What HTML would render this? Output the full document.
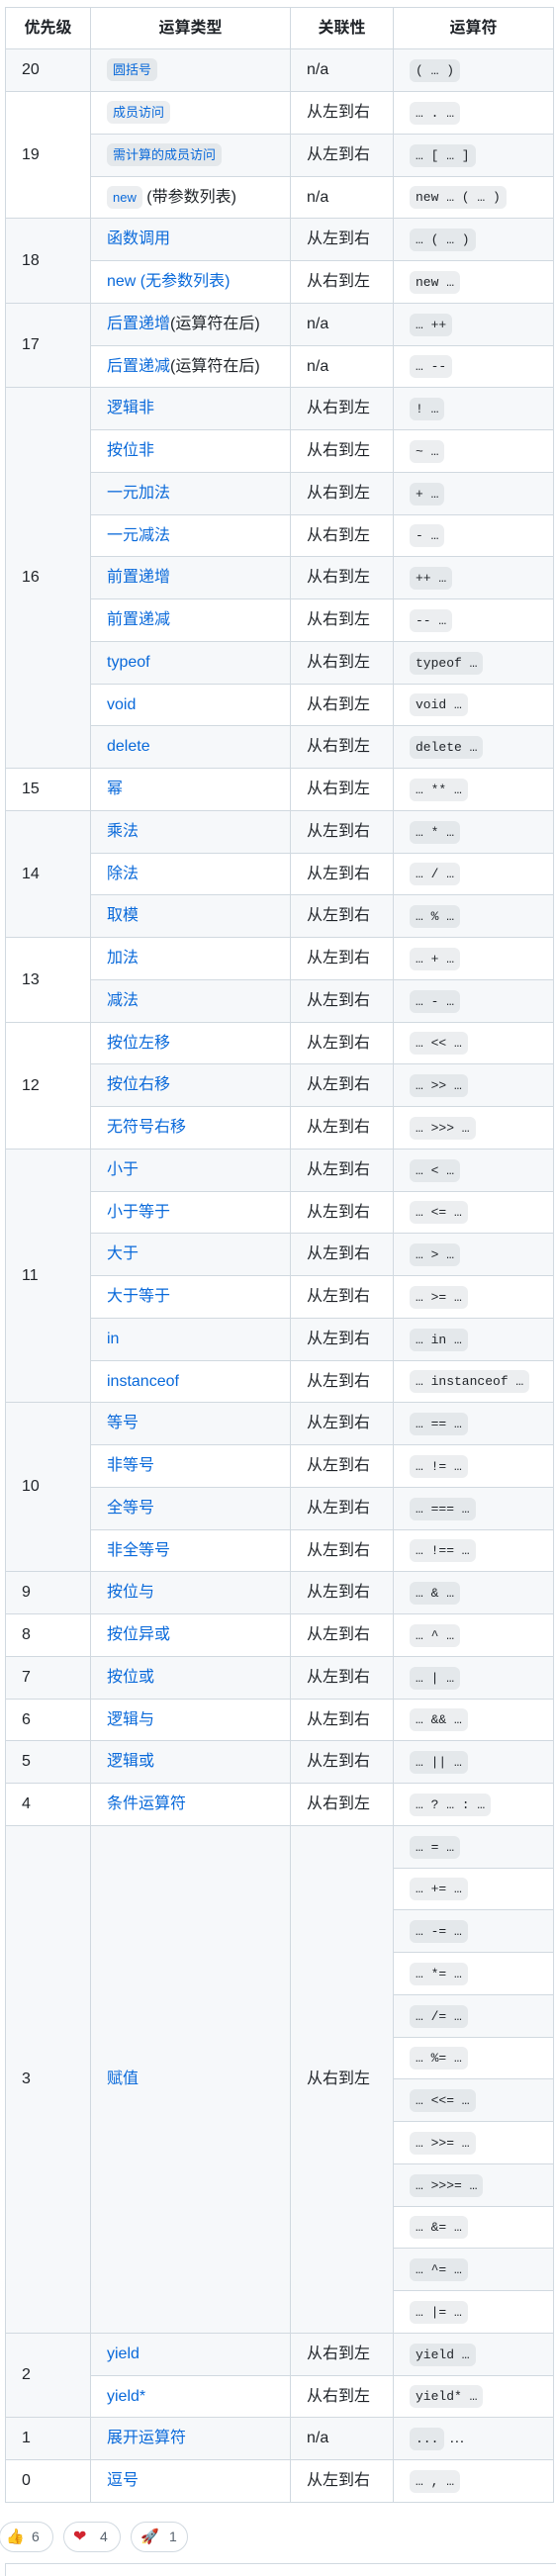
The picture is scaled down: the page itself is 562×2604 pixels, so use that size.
<!DOCTYPE html>
<html><head><meta charset="utf-8">
<style>
html,body{margin:0;padding:0;background:#fff;}
body{width:562px;height:2604px;overflow:hidden;position:relative;font-family:"Liberation Sans","Noto Sans CJK SC",sans-serif;font-size:16px;color:#1f2328;}
table{position:absolute;left:5px;top:7px;border-collapse:collapse;table-layout:fixed;width:554px;}
col.a{width:86px}col.b{width:202px}col.c{width:104px}col.d{width:162px}
th,td{border:1px solid #d1d9e0;padding:0 16px;line-height:20px;white-space:nowrap;overflow:hidden;}
th{height:41px;font-weight:bold;text-align:center;background:#fff;}
tbody tr{height:43px;}
tbody tr:nth-child(4n){height:42px;}
tbody tr:nth-child(odd){background:#f6f8fa;}
tbody tr:nth-child(even){background:#fff;}
a{color:#0969da;text-decoration:none;}
code{font-family:"Liberation Mono","Noto Sans CJK SC",monospace;font-size:13px;background:rgba(129,139,152,0.15);border-radius:6px;padding:4px 6px;white-space:pre;}
a code{color:#0969da;font-family:"Liberation Sans","Noto Sans CJK SC",sans-serif;}
.re{position:absolute;top:2549px;height:29px;border:1px solid #d1d9e0;border-radius:16px;font-size:14px;color:#59636e;line-height:29px;}
.line{position:absolute;left:5px;top:2591px;width:557px;height:1px;background:#d1d9e0;}
.vl{position:absolute;left:5px;top:2591px;width:1px;height:13px;background:#d1d9e0;}
</style></head><body>
<table>
<colgroup><col class="a"><col class="b"><col class="c"><col class="d"></colgroup>
<thead><tr><th>优先级</th><th>运算类型</th><th>关联性</th><th>运算符</th></tr></thead>
<tbody>
<tr><td>20</td><td><a><code>圆括号</code></a></td><td>n/a</td><td><code>( … )</code></td></tr>
<tr><td rowspan="3">19</td><td><a><code>成员访问</code></a></td><td>从左到右</td><td><code>… . …</code></td></tr>
<tr><td><a><code>需计算的成员访问</code></a></td><td>从左到右</td><td><code>… [ … ]</code></td></tr>
<tr><td><a><code>new</code></a> (带参数列表)</td><td>n/a</td><td><code>new … ( … )</code></td></tr>
<tr><td rowspan="2">18</td><td><a>函数调用</a></td><td>从左到右</td><td><code>… ( … )</code></td></tr>
<tr><td><a>new (无参数列表)</a></td><td>从右到左</td><td><code>new …</code></td></tr>
<tr><td rowspan="2">17</td><td><a>后置递增</a>(运算符在后)</td><td>n/a</td><td><code>… ++</code></td></tr>
<tr><td><a>后置递减</a>(运算符在后)</td><td>n/a</td><td><code>… --</code></td></tr>
<tr><td rowspan="9">16</td><td><a>逻辑非</a></td><td>从右到左</td><td><code>! …</code></td></tr>
<tr><td><a>按位非</a></td><td>从右到左</td><td><code>~ …</code></td></tr>
<tr><td><a>一元加法</a></td><td>从右到左</td><td><code>+ …</code></td></tr>
<tr><td><a>一元减法</a></td><td>从右到左</td><td><code>- …</code></td></tr>
<tr><td><a>前置递增</a></td><td>从右到左</td><td><code>++ …</code></td></tr>
<tr><td><a>前置递减</a></td><td>从右到左</td><td><code>-- …</code></td></tr>
<tr><td><a>typeof</a></td><td>从右到左</td><td><code>typeof …</code></td></tr>
<tr><td><a>void</a></td><td>从右到左</td><td><code>void …</code></td></tr>
<tr><td><a>delete</a></td><td>从右到左</td><td><code>delete …</code></td></tr>
<tr><td>15</td><td><a>幂</a></td><td>从右到左</td><td><code>… ** …</code></td></tr>
<tr><td rowspan="3">14</td><td><a>乘法</a></td><td>从左到右</td><td><code>… * …</code></td></tr>
<tr><td><a>除法</a></td><td>从左到右</td><td><code>… / …</code></td></tr>
<tr><td><a>取模</a></td><td>从左到右</td><td><code>… % …</code></td></tr>
<tr><td rowspan="2">13</td><td><a>加法</a></td><td>从左到右</td><td><code>… + …</code></td></tr>
<tr><td><a>减法</a></td><td>从左到右</td><td><code>… - …</code></td></tr>
<tr><td rowspan="3">12</td><td><a>按位左移</a></td><td>从左到右</td><td><code>… &lt;&lt; …</code></td></tr>
<tr><td><a>按位右移</a></td><td>从左到右</td><td><code>… &gt;&gt; …</code></td></tr>
<tr><td><a>无符号右移</a></td><td>从左到右</td><td><code>… &gt;&gt;&gt; …</code></td></tr>
<tr><td rowspan="6">11</td><td><a>小于</a></td><td>从左到右</td><td><code>… &lt; …</code></td></tr>
<tr><td><a>小于等于</a></td><td>从左到右</td><td><code>… &lt;= …</code></td></tr>
<tr><td><a>大于</a></td><td>从左到右</td><td><code>… &gt; …</code></td></tr>
<tr><td><a>大于等于</a></td><td>从左到右</td><td><code>… &gt;= …</code></td></tr>
<tr><td><a>in</a></td><td>从左到右</td><td><code>… in …</code></td></tr>
<tr><td><a>instanceof</a></td><td>从左到右</td><td><code>… instanceof …</code></td></tr>
<tr><td rowspan="4">10</td><td><a>等号</a></td><td>从左到右</td><td><code>… == …</code></td></tr>
<tr><td><a>非等号</a></td><td>从左到右</td><td><code>… != …</code></td></tr>
<tr><td><a>全等号</a></td><td>从左到右</td><td><code>… === …</code></td></tr>
<tr><td><a>非全等号</a></td><td>从左到右</td><td><code>… !== …</code></td></tr>
<tr><td>9</td><td><a>按位与</a></td><td>从左到右</td><td><code>… &amp; …</code></td></tr>
<tr><td>8</td><td><a>按位异或</a></td><td>从左到右</td><td><code>… ^ …</code></td></tr>
<tr><td>7</td><td><a>按位或</a></td><td>从左到右</td><td><code>… | …</code></td></tr>
<tr><td>6</td><td><a>逻辑与</a></td><td>从左到右</td><td><code>… &amp;&amp; …</code></td></tr>
<tr><td>5</td><td><a>逻辑或</a></td><td>从左到右</td><td><code>… || …</code></td></tr>
<tr><td>4</td><td><a>条件运算符</a></td><td>从右到左</td><td><code>… ? … : …</code></td></tr>
<tr><td rowspan="12">3</td><td rowspan="12"><a>赋值</a></td><td rowspan="12">从右到左</td><td><code>… = …</code></td></tr>
<tr><td><code>… += …</code></td></tr>
<tr><td><code>… -= …</code></td></tr>
<tr><td><code>… *= …</code></td></tr>
<tr><td><code>… /= …</code></td></tr>
<tr><td><code>… %= …</code></td></tr>
<tr><td><code>… &lt;&lt;= …</code></td></tr>
<tr><td><code>… &gt;&gt;= …</code></td></tr>
<tr><td><code>… &gt;&gt;&gt;= …</code></td></tr>
<tr><td><code>… &amp;= …</code></td></tr>
<tr><td><code>… ^= …</code></td></tr>
<tr><td><code>… |= …</code></td></tr>
<tr><td rowspan="2">2</td><td><a>yield</a></td><td>从右到左</td><td><code>yield …</code></td></tr>
<tr><td><a>yield*</a></td><td>从右到左</td><td><code>yield* …</code></td></tr>
<tr><td>1</td><td><a>展开运算符</a></td><td>n/a</td><td><code>...</code> …</td></tr>
<tr><td>0</td><td><a>逗号</a></td><td>从左到右</td><td><code>… , …</code></td></tr>
</tbody></table>

<div class="re" style="left:-1px;width:53px;"><span style="position:absolute;left:6px;top:0;font-size:15px;">👍</span><span style="position:absolute;left:32px;">6</span></div>
<div class="re" style="left:64px;width:56px;"><span style="position:absolute;left:9px;top:0;color:#d1242f;font-size:16px;">❤</span><span style="position:absolute;left:36px;">4</span></div>
<div class="re" style="left:132px;width:56px;"><span style="position:absolute;left:9px;top:0;font-size:15px;">🚀</span><span style="position:absolute;left:38px;">1</span></div>
<div class="line"></div><div class="vl"></div>
</body></html>
